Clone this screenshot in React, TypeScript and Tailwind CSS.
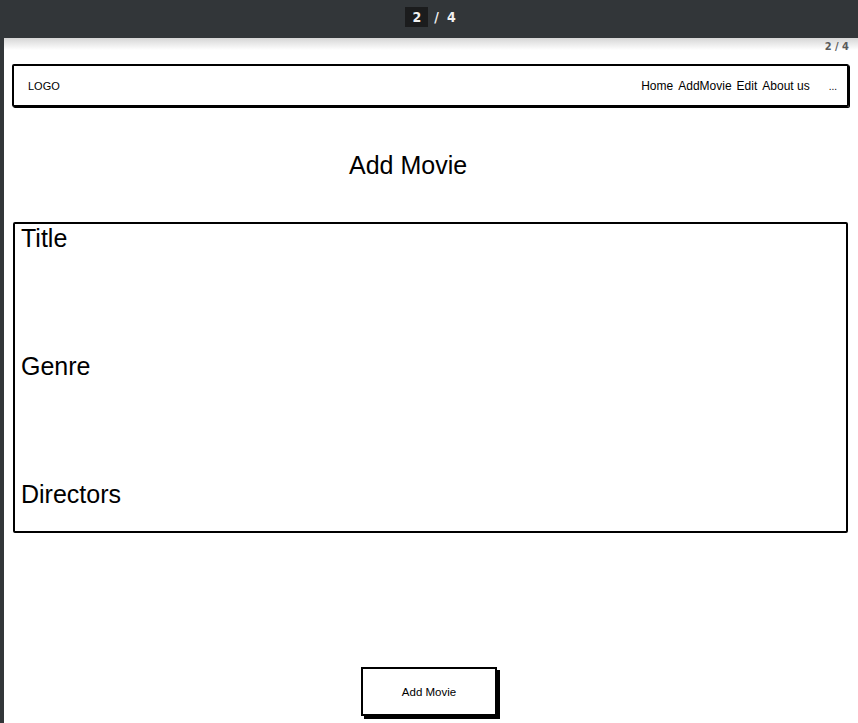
import * as React from 'react';

const sketch = { fontFamily: '"Liberation Sans", Arial, sans-serif' };

export default function App() {
  return (
    <div className="flex h-[723px] w-[858px] flex-col overflow-hidden bg-[#323639]" style={sketch}>
      {/* viewer toolbar */}
      <div className="flex h-[38px] shrink-0 items-center justify-center pb-[4px] pl-[3px] text-[14px] font-bold text-[#f1f1f1]" style={{ fontFamily: '"DejaVu Sans Condensed", "DejaVu Sans", sans-serif' }}>
        <span className="flex h-[20px] w-[23px] items-center justify-center bg-[#1b1c1d]">2</span>
        <span className="ml-[6px]">/</span>
        <span className="ml-[8px]">4</span>
      </div>

      {/* page */}
      <div className="ml-[4px] flex flex-1 flex-col bg-[linear-gradient(to_bottom,#d6d6d6,#ffffff_12px)]">
        <div className="flex h-[26px] justify-end pr-[9px] pt-[1px] text-[11px] font-bold text-[#5a5a5a]" style={{ fontFamily: '"DejaVu Sans Condensed", "DejaVu Sans", sans-serif' }}>
          2 / 4
        </div>

        {/* nav bar */}
        <div className="ml-[8px] mr-[9px] flex h-[43px] items-center rounded-[2px] border-2 border-black pl-[14px] pr-[10px] pt-[1px] text-[12px] text-black shadow-[1px_1px_0_#000]">
          <span className="text-[11px]">LOGO</span>
          <div className="ml-auto flex items-center gap-[5px]">
            <span>Home</span>
            <span>AddMovie</span>
            <span>Edit</span>
            <span>About us</span>
          </div>
          <span className="ml-[19px] text-[10px]">...</span>
        </div>

        <h1 className="ml-[345px] mt-[43px] h-[30px] text-[25px] leading-[30px] text-black">Add Movie</h1>

        {/* form */}
        <div className="ml-[9px] mr-[10px] mt-[42px] flex h-[311px] flex-col gap-[99px] rounded-[2px] border-2 border-black pl-[6px] text-[25px] leading-[29px] text-black">
          <span>Title</span>
          <span>Genre</span>
          <span>Directors</span>
        </div>

        <div className="mt-[134px] flex pl-[357px]">
          <button className="flex h-[49px] w-[136px] items-center justify-center border-2 border-black bg-white pt-[3px] text-[11.5px] text-black shadow-[3px_3px_0_#000]">
            Add Movie
          </button>
        </div>
      </div>
    </div>
  );
}
